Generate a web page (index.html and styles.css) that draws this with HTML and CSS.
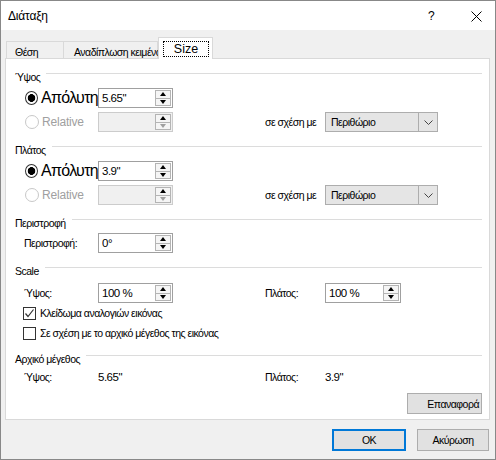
FILE: index.html
```html
<html>
<head>
    <title>Διάταξη</title>
    <link rel="stylesheet" href="styles.css">
</head>

<body>
    <div class="window">
        <div class="titlebar">
            <div class="titlebar__title">Διάταξη</div>
            <div class="titlebar__help">?</div>
            <div class="titlebar__close">
                <svg width="11" height="11" viewBox="0 0 11 11">
                    <path d="M0.5 0.5 L10.5 10.5 M10.5 0.5 L0.5 10.5" stroke="#000" stroke-width="1" fill="none"/>
                </svg>
            </div>
        </div>

        <div class="client">
            <div class="tabs">
                <div class="tab">Θέση</div>
                <div class="tab tab--wide">Αναδίπλωση κειμένου</div>
                <div class="tab tab--active"><span class="tab__focus">Size</span></div>
            </div>

            <div class="panel">
                <!-- height -->
                <div class="group">Ύψος</div>
                <div class="row row--first">
                    <div class="radio radio--on big">Απόλυτη</div>
                    <div class="spin"><div class="spin__text">5.65"</div><div class="spin__btns"><div class="spin__up"></div><div class="spin__down"></div></div></div>
                </div>
                <div class="row">
                    <div class="radio radio--off">Relative</div>
                    <div class="spin spin--off"><div class="spin__text"></div><div class="spin__btns"><div class="spin__up"></div><div class="spin__down"></div></div></div>
                    <div></div>
                    <div class="label">σε σχέση με</div>
                    <div class="select"><div class="select__text">Περιθώριο</div><div class="select__btn"><svg width="9" height="5" viewBox="0 0 9 5"><path d="M0.5 0.5 L4.5 4.5 L8.5 0.5" stroke="#444" fill="none"/></svg></div></div>
                </div>

                <!-- width -->
                <div class="group">Πλάτος</div>
                <div class="row row--first">
                    <div class="radio radio--on big">Απόλυτη</div>
                    <div class="spin"><div class="spin__text">3.9"</div><div class="spin__btns"><div class="spin__up"></div><div class="spin__down"></div></div></div>
                </div>
                <div class="row">
                    <div class="radio radio--off">Relative</div>
                    <div class="spin spin--off"><div class="spin__text"></div><div class="spin__btns"><div class="spin__up"></div><div class="spin__down"></div></div></div>
                    <div></div>
                    <div class="label">σε σχέση με</div>
                    <div class="select"><div class="select__text">Περιθώριο</div><div class="select__btn"><svg width="9" height="5" viewBox="0 0 9 5"><path d="M0.5 0.5 L4.5 4.5 L8.5 0.5" stroke="#444" fill="none"/></svg></div></div>
                </div>

                <!-- rotation -->
                <div class="group">Περιστροφή</div>
                <div class="row row--single">
                    <div class="label">Περιστροφή:</div>
                    <div class="spin"><div class="spin__text">0°</div><div class="spin__btns"><div class="spin__up"></div><div class="spin__down"></div></div></div>
                </div>

                <!-- scale -->
                <div class="group">Scale</div>
                <div class="row row--scale">
                    <div class="label">Ύψος:</div>
                    <div class="spin"><div class="spin__text">100 %</div><div class="spin__btns"><div class="spin__up"></div><div class="spin__down"></div></div></div>
                    <div></div>
                    <div class="label">Πλάτος:</div>
                    <div class="spin spin--short"><div class="spin__text">100 %</div><div class="spin__btns"><div class="spin__up"></div><div class="spin__down"></div></div></div>
                </div>
                <div class="check check--on">
                    <div class="check__box"><svg width="11" height="11" viewBox="0 0 11 11"><path d="M1.5 5.5 L4 8.5 L9.5 1.5" stroke="#333" stroke-width="1.2" fill="none"/></svg></div>
                    Κλείδωμα αναλογιών εικόνας
                </div>
                <div class="check">
                    <div class="check__box"></div>
                    Σε σχέση με το αρχικό μέγεθος της εικόνας
                </div>

                <!-- original size -->
                <div class="group">Αρχικό μέγεθος</div>
                <div class="row row--orig">
                    <div class="label">Ύψος:</div>
                    <div class="value">5.65"</div>
                    <div></div>
                    <div class="label">Πλάτος:</div>
                    <div class="value">3.9"</div>
                </div>
                <div class="reset">
                    <div class="button button--reset">Επαναφορά</div>
                </div>
            </div>

            <div class="footer">
                <div class="button button--default">OK</div>
                <div class="button">Ακύρωση</div>
            </div>
        </div>
    </div>
</body>
</html>
```

FILE: styles.css
```css
body {
    margin: 0;
    font-family: 'Liberation Sans', Arial, sans-serif;
    font-size: 10.5px;
    letter-spacing: -0.5px;
    color: #000;
}

.window {
    width: 496px;
    height: 460px;
    border: 1px solid #888;
    box-sizing: border-box;
    background-color: #f0f0f0;
}

.titlebar {
    height: 29px;
    background-color: #fff;
    display: flex;
    align-items: center;
}

.titlebar__title {
    flex: 1;
    padding-left: 7px;
    font-size: 12px;
    letter-spacing: -0.2px;
}

.titlebar__help {
    width: 30px;
    font-size: 12px;
    text-align: center;
    margin-right: 13px;
}

.titlebar__close {
    width: 34px;
    display: flex;
    justify-content: center;
    padding-top: 1px;
    margin-right: 2px;
}

.client {
    padding: 7px 5px 0 4px;
}

/* tabs */
.tabs {
    display: flex;
    align-items: flex-end;
    height: 21px;
    padding-left: 1px;
}

.tab {
    height: 17px;
    box-sizing: border-box;
    border: 1px solid #d9d9d9;
    border-bottom: none;
    padding: 4px 0 0 8px;
    width: 58px;
    white-space: nowrap;
}

.tab--wide {
    width: 94px;
    border-left: none;
    padding-left: 10px;
}

.tab--active {
    position: relative;
    z-index: 1;
    width: 55px;
    height: 22px;
    margin-bottom: -1px;
    background-color: #fff;
    padding: 3px 0 0 4px;
    font-size: 12.5px;
    letter-spacing: 0;
}

.tab__focus {
    display: block;
    width: 44px;
    height: 14px;
    line-height: 14px;
    border: 1px dotted #000;
    text-align: center;
}

/* page */
.panel {
    height: 362px;
    box-sizing: border-box;
    background-color: #fff;
    border: 1px solid #d9d9d9;
    padding: 11px 7px 0 9px;
}

.group {
    display: flex;
    height: 14px;
    line-height: 14px;
    margin-top: 11px;
}

.group:first-child {
    margin-top: 0;
}

.group::after {
    content: "";
    flex: 1;
    height: 1px;
    margin: 3px 0 0 6px;
    background-color: #dcdcdc;
}

.row {
    display: grid;
    grid-template-columns: 74px 75px 92px 60px 113px;
    align-items: center;
    height: 20px;
    margin-top: 4px;
    padding-left: 9px;
}

.row--single {
    margin-top: 3px;
}

.row--scale {
    margin-top: 5px;
}

.row--orig {
    height: 16px;
    margin-top: 3px;
}

.label {
    white-space: nowrap;
}

.value {
    font-size: 11.5px;
}

/* radio buttons */
.radio {
    display: flex;
    align-items: center;
    white-space: nowrap;
    font-size: 12px;
    letter-spacing: -0.2px;
    margin-left: 1px;
}

.radio::before {
    content: "";
    width: 12px;
    height: 12px;
    border: 1px solid #333;
    border-radius: 50%;
    margin-right: 3px;
    box-sizing: content-box;
}

.radio--on::before {
    background: radial-gradient(circle, #000 0, #000 3.6px, #fff 4.1px);
}

.radio--off {
    color: #a0a0a0;
}

.radio--off::before {
    border-color: #c8c8c8;
}

.big {
    font-size: 16px;
    letter-spacing: -0.7px;
}

/* spin boxes */
.spin {
    display: flex;
    width: 75px;
    height: 20px;
    box-sizing: border-box;
    border: 1px solid #a0a0a0;
    background-color: #fff;
}

.spin--short {
    width: 76px;
}

.spin--off {
    background-color: #f0f0f0;
    border-color: #ccc;
}

.spin__text {
    flex: 1;
    padding-left: 3px;
    line-height: 18px;
    font-size: 11.5px;
}

.spin__btns {
    width: 16px;
    display: flex;
    flex-direction: column;
    padding: 1px 1px 1px 0;
}

.spin__up,
.spin__down {
    flex: 1;
    border: 1px solid #b4b4b4;
    background-color: #f5f5f5;
    display: flex;
    align-items: center;
    justify-content: center;
}

.spin__down {
    border-top: none;
}

.spin__up::after {
    content: "";
    border-left: 3px solid transparent;
    border-right: 3px solid transparent;
    border-bottom: 4px solid #000;
}

.spin__down::after {
    content: "";
    border-left: 3px solid transparent;
    border-right: 3px solid transparent;
    border-top: 4px solid #000;
}

.spin--off .spin__down::after {
    border-top-color: #a0a0a0;
}

/* dropdown */
.select {
    display: flex;
    width: 113px;
    height: 20px;
    box-sizing: border-box;
    border: 1px solid #adadad;
    background-color: #e5e5e5;
}

.select__text {
    flex: 1;
    padding-left: 5px;
    line-height: 18px;
}

.select__btn {
    width: 18px;
    border-left: 1px solid #adadad;
    display: flex;
    align-items: center;
    justify-content: center;
}

/* check boxes */
.check {
    display: flex;
    align-items: center;
    height: 16px;
    margin-top: 4px;
    padding-left: 8px;
    white-space: nowrap;
}

.check--on {
    margin-top: 2px;
}

.check__box {
    width: 11px;
    height: 11px;
    border: 1px solid #333;
    margin-right: 4px;
    background-color: #fff;
    display: flex;
    align-items: center;
    justify-content: center;
}

/* buttons */
.reset {
    display: flex;
    justify-content: flex-end;
    margin-top: 8px;
}

.button {
    width: 72px;
    height: 22px;
    box-sizing: border-box;
    border: 1px solid #adadad;
    background-color: #e1e1e1;
    display: flex;
    align-items: center;
    justify-content: center;
}

.button--reset {
    width: 75px;
    height: 21px;
    justify-content: flex-end;
    padding-right: 2px;
}

.button--default {
    width: 74px;
    border: 2px solid #0078d7;
}

.footer {
    display: flex;
    justify-content: flex-end;
    gap: 11px;
    margin-top: 9px;
    padding-right: 1px;
}
```
